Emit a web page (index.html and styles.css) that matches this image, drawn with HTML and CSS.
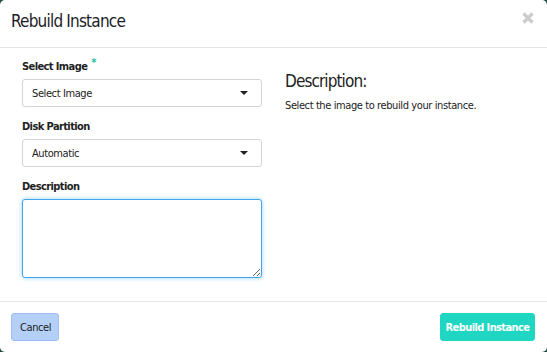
FILE: index.html
```html
<!DOCTYPE html>
<html>
  <head>
    <meta charset="UTF-8" />
    <meta name="viewport" content="width=device-width, initial-scale=1.0" />
    <title>Rebuild Instance</title>
    <link rel="stylesheet" href="styles.css">
  </head>
  <body>
    <div class="modal">
      <div class="modal-header">
        <h3 class="modal-title">Rebuild Instance</h3>
        <button class="close" type="button" aria-label="Close">
          <svg width="12" height="12" viewBox="0 0 12 12">
            <path d="M1.5 1.5 L10.5 10.5 M10.5 1.5 L1.5 10.5" stroke="#cccccc" stroke-width="3.2" />
          </svg>
        </button>
      </div>

      <div class="modal-body">
        <div class="form-col">
          <div class="form-group">
            <label class="control-label required">Select Image</label>
            <div class="select-box">
              <span>Select Image</span>
              <svg class="caret" width="8" height="4" viewBox="0 0 8 4"><path d="M0 0 H8 L4 4 Z" fill="#222" /></svg>
            </div>
          </div>
          <div class="form-group">
            <label class="control-label">Disk Partition</label>
            <div class="select-box">
              <span>Automatic</span>
              <svg class="caret" width="8" height="4" viewBox="0 0 8 4"><path d="M0 0 H8 L4 4 Z" fill="#222" /></svg>
            </div>
          </div>
          <div class="form-group">
            <label class="control-label" for="description">Description</label>
            <textarea id="description" class="form-textarea"></textarea>
          </div>
        </div>
        <div class="help-col">
          <h3>Description:</h3>
          <p>Select the image to rebuild your instance.</p>
        </div>
      </div>

      <div class="modal-footer">
        <button class="btn btn-cancel" type="button">Cancel</button>
        <button class="btn btn-primary" type="button">Rebuild Instance</button>
      </div>
    </div>
  </body>
</html>
```

FILE: styles.css
```css
html {
  background-color: #1f4a3f;
}
body {
  margin: 0;
  font-family: "DejaVu Sans Condensed", "DejaVu Sans", sans-serif;
  color: #222;
}
.modal {
  width: 547px;
  height: 352px;
  background-color: #fff;
  border-radius: 5px;
  display: flex;
  flex-direction: column;
}
.modal-header {
  display: flex;
  justify-content: space-between;
  align-items: flex-start;
  height: 48px;
  padding: 10px 13px 0 11px;
  border-bottom: 1px solid #e5e5e5;
  box-sizing: border-box;
}
.modal-title {
  margin: 0;
  font-size: 17px;
  line-height: 22px;
  font-weight: normal;
  letter-spacing: -0.8px;
  color: #1c1c28;
}
.close {
  border: none;
  background: none;
  padding: 0;
  margin-top: 2px;
  width: 12px;
  height: 12px;
  cursor: pointer;
}
.modal-body {
  flex: 1;
  display: grid;
  grid-template-columns: 262px 1fr;
  padding: 10px 11px 0;
}
.form-col {
  padding: 0 11px;
}
.form-group {
  margin-bottom: 11px;
}
.control-label {
  display: block;
  font-size: 11px;
  font-weight: bold;
  line-height: 17px;
  letter-spacing: -0.6px;
  margin-bottom: 4px;
}
.required::after {
  content: '*';
  color: #1abc9c;
  margin-left: 4px;
  position: relative;
  top: -4px;
}
.select-box {
  display: flex;
  justify-content: space-between;
  align-items: center;
  height: 28px;
  padding: 0 13px 0 9px;
  border: 1px solid #d4d4d4;
  border-radius: 3px;
  box-sizing: border-box;
  font-size: 11px;
  letter-spacing: -0.4px;
}
.form-textarea {
  display: block;
  width: 100%;
  height: 79px;
  box-sizing: border-box;
  border: 1px solid #3fa7ea;
  border-radius: 3px;
  box-shadow: 0 0 4px rgba(63, 167, 234, 0.55);
  outline: none;
  font-family: inherit;
}
.help-col {
  padding-left: 12px;
}
.help-col h3 {
  margin: 13px 0 8px;
  font-size: 17px;
  font-weight: normal;
  letter-spacing: -0.9px;
}
.help-col p {
  margin: 0;
  font-size: 11px;
  letter-spacing: -0.4px;
}
.modal-footer {
  display: flex;
  justify-content: space-between;
  align-items: center;
  height: 50px;
  padding: 0 12px 0 11px;
  border-top: 1px solid #e5e5e5;
}
.btn {
  height: 28px;
  padding: 0 8px;
  border-radius: 3px;
  font-family: inherit;
  font-size: 11px;
  letter-spacing: -0.4px;
  cursor: pointer;
}
.btn-cancel {
  width: 48px;
  background-color: #b4d0f6;
  border: 1px solid #9ebff0;
  color: #1c1c28;
}
.btn-primary {
  width: 95px;
  padding: 0 4px;
  background-color: #1ed6c1;
  border: 1px solid #1ed6c1;
  color: #fff;
  font-weight: bold;
  letter-spacing: -0.6px;
}
```
